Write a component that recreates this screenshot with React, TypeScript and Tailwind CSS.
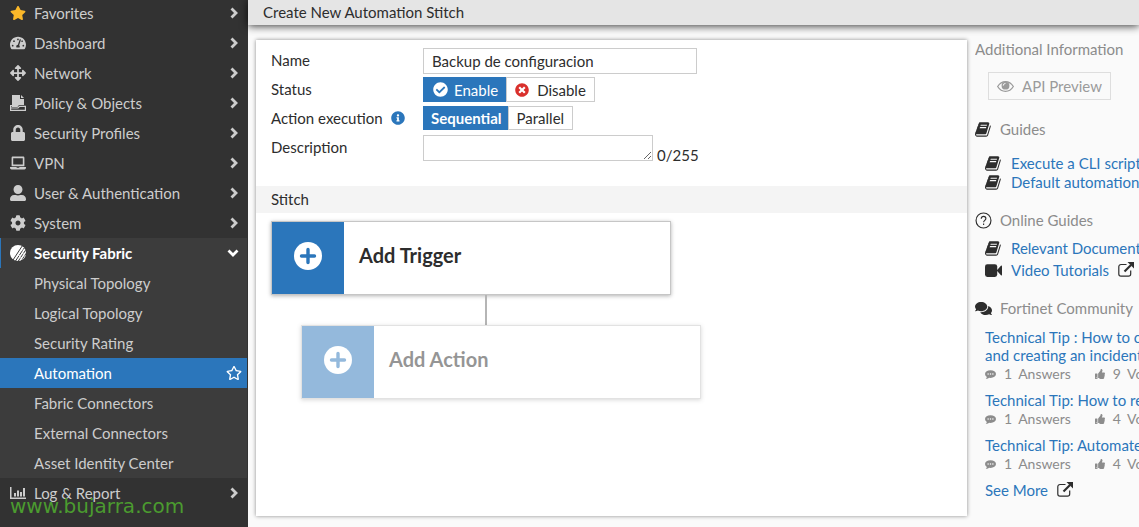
import clsx from "clsx";
import {
  FaArrowsAlt,
  FaCheckCircle,
  FaCog,
  FaComments,
  FaInfoCircle,
  FaLaptop,
  FaLock,
  FaRegStar,
  FaStar,
  FaTachometerAlt,
  FaThumbsUp,
  FaTimesCircle,
  FaUserAlt,
} from "react-icons/fa";

type IconType = React.ComponentType<{ className?: string }>;

function PolicyIcon({ className }: { className?: string }) {
  return (
    <svg viewBox="0 0 16 16" fill="currentColor" className={className}>
      <path d="M2 0h8v4h4v6H9l-1.500 2H2z" />
      <path d="M11 0l3 3h-3z" />
      <path
        d="M2 10.600H.6v4.800h14.800v-4H9.500L8 13H.6"
        fill="none"
        stroke="currentColor"
        strokeWidth="1.200"
      />
    </svg>
  );
}

function FabricIcon({ className }: { className?: string }) {
  return (
    <svg viewBox="0 0 16 16" className={className}>
      <circle cx="8" cy="8" r="8" fill="currentColor" />
      <g stroke="#3c3c3c" strokeWidth="1">
        <path d="M3 15L12.500 0.500" />
        <path d="M5.500 16L14.500 2.500" strokeDasharray="6 .8" />
        <path d="M8 16.500L16 4.500" strokeDasharray="4 .8" />
        <path d="M10.500 17L17 7" strokeDasharray="3 .8" />
      </g>
    </svg>
  );
}

function ChartIcon({ className }: { className?: string }) {
  return (
    <svg viewBox="0 0 16 16" fill="currentColor" className={className}>
      <path d="M0 2h1.500v10.500H16V14H0zM4 8h2v3.500H4zM7 5.500h2v6H7zM10 7h2v4.500h-2zM13 3h2v8.500h-2z" />
    </svg>
  );
}

function BookIcon({ className }: { className?: string }) {
  return (
    <svg viewBox="0 0 1792 1792" fill="currentColor" className={className}>
      <path d="M1639 478q40 57 18 129l-275 906q-19 64-76.5 107.5t-122.5 43.5h-923q-77 0-148.5-53.5t-99.5-131.5q-24-67-2-127 0-4 3-27t4-37q1-8-3-21.5t-3-19.5q2-11 8-21t16.5-23.5 16.5-23.5q23-38 45-91.5t30-91.5q3-10 .5-30t-.5-28q3-11 17-28t17-23q21-36 42-92t25-90q1-9-2.5-32t.5-28q4-13 22-30.5t22-22.5q19-26 42.500-84.500t27.500-96.500q1-8-3-25.500t-2-26.500q2-8 9-18t18-23 17-21q8-12 16.500-30.500t15-35 16-36 19.500-32 26.500-23.500 36-11.500 47.500 5.500l-1 3q38-9 51-9h761q74 0 114 56t18 130l-274 906q-36 119-71.500 153.500t-128.500 34.500h-869q-27 0-38 15-11 16-1 43 24 70 144 70h923q29 0 56-15.500t35-41.500l300-987q7-22 5-57 38 15 59 43zm-1064 2q-4 13 2 22.500t20 9.500h608q13 0 25.500-9.500t16.500-22.500l21-64q4-13-2-22.500t-20-9.500h-608q-13 0-25.500 9.500t-16.500 22.500zm-83 256q-4 13 2 22.500t20 9.500h608q13 0 25.500-9.500t16.500-22.500l21-64q4-13-2-22.500t-20-9.500h-608q-13 0-25.500 9.500t-16.500 22.500z" />
    </svg>
  );
}

function VideoIcon({ className }: { className?: string }) {
  return (
    <svg viewBox="0 0 16 16" fill="currentColor" className={className}>
      <rect y="2" width="11.500" height="12" rx="2.200" />
      <path d="M11 8l4-4.500q1-.7 1 .5v8q0 1.200-1 .5z" />
    </svg>
  );
}

function BubbleIcon({ className }: { className?: string }) {
  return (
    <svg viewBox="0 0 12 12" className={className}>
      <ellipse cx="6" cy="5.500" rx="6" ry="4.200" fill="currentColor" />
      <path d="M2 7.500Q2.200 9.800.8 11q2.900-.3 4.200-2z" fill="currentColor" />
      <g fill="#fafafa">
        <circle cx="3.400" cy="5.500" r=".8" />
        <circle cx="6" cy="5.500" r=".8" />
        <circle cx="8.600" cy="5.500" r=".8" />
      </g>
    </svg>
  );
}

function PlusCircle({ className }: { className?: string }) {
  return (
    <svg viewBox="0 0 28 28" className={className}>
      <circle cx="14" cy="14" r="14" fill="currentColor" />
      <path
        d="M14 7.500v13M7.500 14h13"
        stroke="#2b76bb"
        strokeWidth="3.400"
        strokeLinecap="round"
      />
    </svg>
  );
}

function EyeIcon({ className }: { className?: string }) {
  return (
    <svg viewBox="0 0 16 16" className={className}>
      <path
        d="M.6 8Q3.500 3.400 8 3.400T15.400 8Q12.500 12.600 8 12.600T.6 8z"
        fill="none"
        stroke="currentColor"
        strokeWidth="1.200"
      />
      <circle cx="8" cy="7.200" r="3.700" fill="currentColor" />
      <path
        d="M5.900 7.200A2.100 2.100 0 0 1 8 5.100"
        fill="none"
        stroke="#fafafa"
        strokeWidth=".9"
      />
    </svg>
  );
}

function QuestionIcon({ className }: { className?: string }) {
  return (
    <svg
      viewBox="0 0 18 18"
      fill="none"
      stroke="currentColor"
      strokeWidth="1.200"
      className={className}
    >
      <circle cx="9" cy="9" r="7.900" />
      <path d="M6.600 7.200c0-1.700 1-2.500 2.500-2.500s2.400.9 2.400 2.200c0 1.900-2.400 2-2.400 4" />
      <path d="M9.100 12.200v1.500" />
    </svg>
  );
}

function ExternalIcon({ className }: { className?: string }) {
  return (
    <svg
      viewBox="0 0 16 16"
      fill="none"
      stroke="currentColor"
      className={className}
    >
      <path
        d="M8.500 2.500H3A2.200 2.200 0 0 0 .8 4.700V12A2.200 2.200 0 0 0 3 14.200h7.500a2.200 2.200 0 0 0 2.200-2.200V8.500"
        strokeWidth="1.200"
      />
      <path d="M6.500 9.500L13 3" strokeWidth="2.200" />
      <path d="M9.500 0H16v6.500z" fill="currentColor" stroke="none" />
    </svg>
  );
}

function Chevron({ open }: { open?: boolean }) {
  return (
    <svg
      viewBox="0 0 12 12"
      fill="none"
      stroke="currentColor"
      strokeWidth="2.800"
      className={clsx("size-3", open && "rotate-90")}
    >
      <path d="M3.500 1.500L8 6l-4.500 4.500" />
    </svg>
  );
}

const menu: { label: string; icon: IconType; iconClass?: string }[] = [
  { label: "Favorites", icon: FaStar, iconClass: "text-[#fbb829]" },
  { label: "Dashboard", icon: FaTachometerAlt },
  { label: "Network", icon: FaArrowsAlt },
  { label: "Policy & Objects", icon: PolicyIcon },
  { label: "Security Profiles", icon: FaLock },
  { label: "VPN", icon: FaLaptop },
  { label: "User & Authentication", icon: FaUserAlt },
  { label: "System", icon: FaCog },
];

const fabricMenu = [
  "Physical Topology",
  "Logical Topology",
  "Security Rating",
  "Automation",
  "Fabric Connectors",
  "External Connectors",
  "Asset Identity Center",
];

const tips = [
  {
    lines: ["Technical Tip : How to create", "and creating an incident"],
    votes: 9,
  },
  { lines: ["Technical Tip: How to restore"], votes: 4 },
  { lines: ["Technical Tip: Automated"], votes: 4 },
];

function MenuButton({
  label,
  icon: Icon,
  iconClass,
  open,
}: {
  label: string;
  icon: IconType;
  iconClass?: string;
  open?: boolean;
}) {
  return (
    <button
      type="button"
      className={clsx(
        "flex h-[30px] w-full items-center pr-2 text-left",
        open
          ? "border-l border-[#2b76bb] pl-[9px] font-bold text-white"
          : "pl-2.5",
      )}
    >
      <Icon className={clsx("mr-2 size-4 flex-none", iconClass)} />
      <span className="flex-1">{label}</span>
      <Chevron open={open} />
    </button>
  );
}

function Sidebar() {
  return (
    <nav className="relative -mt-0.5 w-[248px] flex-none bg-[#323232] text-[#cdcdcd]">
      <ul>
        {menu.map((item) => (
          <li key={item.label}>
            <MenuButton {...item} />
          </li>
        ))}
        <li className="mr-px bg-[#3c3c3c]">
          <MenuButton label="Security Fabric" icon={FabricIcon} open />
          <ul>
            {fabricMenu.map((label) => (
              <li key={label}>
                <a
                  href="#"
                  className={clsx(
                    "flex h-[30px] items-center justify-between pr-[5px] pl-[34px]",
                    label === "Automation" && "bg-[#2b76bb] text-white",
                  )}
                >
                  {label}
                  {label === "Automation" && <FaRegStar className="size-4" />}
                </a>
              </li>
            ))}
          </ul>
        </li>
        <li>
          <MenuButton label="Log & Report" icon={ChartIcon} />
        </li>
      </ul>
      <span className="absolute bottom-[9px] left-2.5 font-['DejaVu_Sans'] text-[20px] leading-6 text-[#4b9b2f]">
        www.bujarra.com
      </span>
    </nav>
  );
}

function StitchNode({
  label,
  className,
}: {
  label: string;
  className?: string;
}) {
  return (
    <button
      type="button"
      className={clsx(
        "flex w-[400px] items-center border border-[#c6c6c6] bg-white text-left text-xl font-bold shadow-[0_1px_4px_rgba(0,0,0,0.3)]",
        className,
      )}
    >
      <span className="flex size-[72px] items-center justify-center bg-[#2b76bb] pb-1 text-white">
        <PlusCircle className="size-7" />
      </span>
      <span className="pb-1.5 pl-[15px]">{label}</span>
    </button>
  );
}

function StitchForm() {
  return (
    <form className="flex-1 bg-white pt-2 shadow-[0_0_4px_rgba(0,0,0,0.45)]">
      <div className="grid auto-rows-[29px] grid-cols-[152px_1fr] pl-[15px] leading-6">
        <label htmlFor="name">Name</label>
        <input
          id="name"
          defaultValue="Backup de configuracion"
          className="h-[26px] w-[274px] border border-[#ccc] px-2"
        />
        <span id="status">Status</span>
        <div role="group" aria-labelledby="status" className="flex h-[25px]">
          <button
            type="button"
            className="flex items-center bg-[#2b76bb] pr-2 pl-2.5 text-white"
          >
            <FaCheckCircle className="mr-1.5 size-[15px]" />
            Enable
          </button>
          <button
            type="button"
            className="flex items-center border border-[#ccc] px-2"
          >
            <FaTimesCircle className="mr-2 size-3.5 text-[#d9302c]" />
            Disable
          </button>
        </div>
        <span id="execution" className="flex items-center gap-2 self-start">
          Action execution
          <FaInfoCircle className="size-3.5 text-[#2b76bb]" />
        </span>
        <div role="group" aria-labelledby="execution" className="flex h-6">
          <button
            type="button"
            className="flex items-center bg-[#2b76bb] pr-1.5 pl-2 font-bold text-white"
          >
            Sequential
          </button>
          <button
            type="button"
            className="flex items-center border border-[#ccc] px-2"
          >
            Parallel
          </button>
        </div>
        <label htmlFor="description">Description</label>
        <div className="flex gap-1">
          <textarea
            id="description"
            className="h-[26px] w-[230px] border border-[#ccc]"
          />
          <span className="mt-2">0/255</span>
        </div>
      </div>
      <h2 className="mt-[22px] bg-[#f4f4f4] pl-[15px] leading-[27px]">
        Stitch
      </h2>
      <div className="mt-2 ml-[15px]">
        <StitchNode label="Add Trigger" />
        <div className="ml-[214px] h-[30px] w-0.5 bg-[#b5b5b5]" />
        <StitchNode label="Add Action" className="ml-[30px] opacity-50" />
      </div>
    </form>
  );
}

function SectionTitle({
  icon: Icon,
  children,
}: {
  icon: IconType;
  children: React.ReactNode;
}) {
  return (
    <h3 className="flex items-center gap-2 leading-5 text-[#8c8c8c]">
      <Icon className="size-[17px] flex-none text-[#2d2d2d]" />
      {children}
    </h3>
  );
}

function GuideLink({
  icon: Icon,
  external,
  children,
}: {
  icon: IconType;
  external?: boolean;
  children: React.ReactNode;
}) {
  return (
    <a href="#" className="flex items-center gap-[9px] text-[#2b76bb]">
      <Icon className="size-[17px] flex-none text-[#2d2d2d]" />
      {children}
      {external && <ExternalIcon className="size-4 text-[#2d2d2d]" />}
    </a>
  );
}

function InfoPanel() {
  return (
    <aside className="w-[164px] flex-none overflow-hidden whitespace-nowrap">
      <h2 className="leading-[18px] text-[#8c8c8c]">Additional Information</h2>
      <button
        type="button"
        className="mt-3.5 mb-[19px] ml-[13px] flex h-7 items-center gap-2 border border-[#dedede] px-2 text-[#9b9b9b]"
      >
        <EyeIcon className="size-[17px]" />
        API Preview
      </button>
      <SectionTitle icon={BookIcon}>Guides</SectionTitle>
      <div className="mt-[15px] mb-[18px] ml-2.5 leading-[19px]">
        <GuideLink icon={BookIcon}>Execute a CLI script</GuideLink>
        <GuideLink icon={BookIcon}>Default automation stitches</GuideLink>
      </div>
      <SectionTitle icon={QuestionIcon}>Online Guides</SectionTitle>
      <div className="mt-[7px] mb-[17px] ml-2.5 leading-[22px]">
        <GuideLink icon={BookIcon}>Relevant Documentation</GuideLink>
        <GuideLink icon={VideoIcon} external>
          Video Tutorials
        </GuideLink>
      </div>
      <SectionTitle icon={FaComments}>Fortinet Community</SectionTitle>
      <ul className="mt-2.5 ml-2.5 space-y-[7px]">
        {tips.map((tip) => (
          <li key={tip.lines[0]}>
            <a href="#" className="block leading-[18px] text-[#2b76bb]">
              {tip.lines.map((line) => (
                <span key={line} className="block">
                  {line}
                </span>
              ))}
            </a>
            <p className="flex items-center text-sm leading-5 text-[#8c8c8c]">
              <BubbleIcon className="mr-2 size-[11px] flex-none" />
              <span className="mr-1.5">1</span>
              <span className="mr-6">Answers</span>
              <FaThumbsUp className="mr-2 size-2.5 flex-none" />
              <span className="mr-1.5">{tip.votes}</span>
              <span>Votes</span>
            </p>
          </li>
        ))}
      </ul>
      <a
        href="#"
        className="mt-1.5 ml-2.5 flex items-center gap-[9px] leading-5 text-[#2b76bb]"
      >
        See More
        <ExternalIcon className="size-4 text-[#2d2d2d]" />
      </a>
    </aside>
  );
}

export default function App() {
  return (
    <div className="flex h-screen overflow-hidden bg-[#fafafa] font-[Lato,sans-serif] text-[15px] text-[#2d2d2d]">
      <Sidebar />
      <div className="flex min-w-0 flex-1 flex-col">
        <header className="z-10 bg-[#e5e5e5] pl-[15px] leading-[25px] shadow-[0_1px_8px_rgba(0,0,0,0.8)]">
          <h1>Create New Automation Stitch</h1>
        </header>
        <main className="flex flex-1 gap-2 pt-[15px] pb-[11px] pl-2">
          <StitchForm />
          <InfoPanel />
        </main>
      </div>
    </div>
  );
}
